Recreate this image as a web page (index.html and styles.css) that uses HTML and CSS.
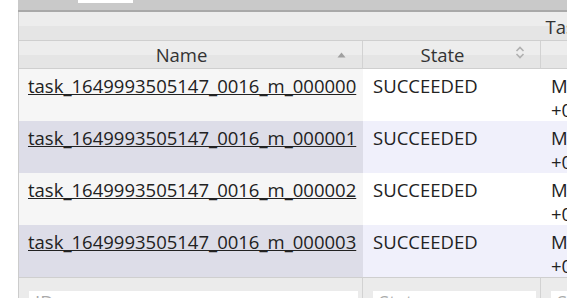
FILE: index.html
```html
<!DOCTYPE html>
<html lang="en">
<head>
    <meta charset="UTF-8">
    <meta name="viewport" content="width=device-width, initial-scale=1.0">
    <title>Tasks</title>
    <link rel="stylesheet" href="styles.css">
</head>
<body>
    <div class="page">
        <!-- Toolbar (scrolled off the top) -->
        <div class="toolbar"><span class="search-box"></span></div>

        <!-- Task table -->
        <table class="grid">
            <colgroup>
                <col class="col-name">
                <col class="col-state">
                <col class="col-time">
                <col class="col-time">
                <col class="col-elapsed">
            </colgroup>
            <thead>
                <tr class="group-row">
                    <th colspan="5">Tasks</th>
                </tr>
                <tr class="head-row">
                    <th class="sort-asc">Name
                        <svg class="sort-icon" width="9" height="6" viewBox="0 0 9 6"><path d="M4.5 0.5 L8.5 5.5 L0.5 5.5 Z" fill="#a0a0a0"/></svg>
                    </th>
                    <th class="sortable">State
                        <svg class="sort-icon" width="10" height="13" viewBox="0 0 10 13"><path d="M1.5 5 L5 1.5 L8.5 5" fill="none" stroke="#b0b0b0" stroke-width="1.6"/><path d="M1.5 8 L5 11.5 L8.5 8" fill="none" stroke="#b0b0b0" stroke-width="1.6"/></svg>
                    </th>
                    <th class="sortable">Start Time</th>
                    <th class="sortable">Finish Time</th>
                    <th class="sortable">Elapsed Time</th>
                </tr>
            </thead>
            <tbody>
                <tr class="odd">
                    <td class="sorted"><a href="#">task_1649993505147_0016_m_000000</a></td>
                    <td>SUCCEEDED</td>
                    <td>Mon Apr 18 10:41:12<br>+0800 2022</td>
                    <td>Mon Apr 18 10:41:20<br>+0800 2022</td>
                    <td>8sec</td>
                </tr>
                <tr class="even">
                    <td class="sorted"><a href="#">task_1649993505147_0016_m_000001</a></td>
                    <td>SUCCEEDED</td>
                    <td>Mon Apr 18 10:41:12<br>+0800 2022</td>
                    <td>Mon Apr 18 10:41:21<br>+0800 2022</td>
                    <td>9sec</td>
                </tr>
                <tr class="odd">
                    <td class="sorted"><a href="#">task_1649993505147_0016_m_000002</a></td>
                    <td>SUCCEEDED</td>
                    <td>Mon Apr 18 10:41:12<br>+0800 2022</td>
                    <td>Mon Apr 18 10:41:20<br>+0800 2022</td>
                    <td>8sec</td>
                </tr>
                <tr class="even">
                    <td class="sorted"><a href="#">task_1649993505147_0016_m_000003</a></td>
                    <td>SUCCEEDED</td>
                    <td>Mon Apr 18 10:41:12<br>+0800 2022</td>
                    <td>Mon Apr 18 10:41:21<br>+0800 2022</td>
                    <td>9sec</td>
                </tr>
            </tbody>
            <tfoot>
                <tr>
                    <th><input type="text" placeholder="ID"></th>
                    <th><input type="text" placeholder="State"></th>
                    <th><input type="text" placeholder="Start Time"></th>
                    <th><input type="text" placeholder="Finish Time"></th>
                    <th><input type="text" placeholder="Elapsed Time"></th>
                </tr>
            </tfoot>
        </table>
    </div>
</body>
</html>
```

FILE: styles.css
```css
html, body {
    margin: 0;
    overflow: hidden;
    background: #fff;
}
body {
    font-family: "Open Sans", "Noto Sans", sans-serif;
    font-size: 18.5px;
    color: #222;
}
.page {
    padding-left: 18px;
}
.toolbar {
    width: 1104px;
    height: 10px;
    background: #c9c9c9;
    border-bottom: 2px solid #a9a9a9;
}
.search-box {
    display: block;
    margin-left: 60px;
    width: 55px;
    height: 3px;
    background: #fff;
}
.grid {
    width: 1102px;
    table-layout: fixed;
    border-collapse: separate;
    border-spacing: 0;
    border-left: 1px solid #cccccc;
}
.col-name { width: 344px; }
.col-state { width: 178px; }
.col-time { width: 210px; }
.grid thead th {
    font-weight: normal;
    color: #333;
    background: linear-gradient(to bottom, #ededed 50%, #e5e5e5 50%);
    border-bottom: 1px solid #cfcfcf;
    text-align: center;
    position: relative;
}
.group-row th {
    height: 28px;
    padding: 0;
}
.head-row th {
    height: 27px;
    padding: 0 18px 0 0;
    border-right: 1px solid #d2d2d2;
}
.sort-icon {
    position: absolute;
    right: 16px;
    top: 11px;
}
.sortable .sort-icon {
    right: 15px;
    top: 5px;
}
.grid tbody td {
    padding: 5px 10px 0 9px;
    line-height: 23.5px;
    vertical-align: top;
    white-space: nowrap;
    overflow: hidden;
}
.grid tbody td + td {
    padding-left: 10px;
}
.grid a {
    color: #222;
    text-decoration: underline;
}
.odd td { background: #ffffff; }
.odd td.sorted { background: #f6f6f6; }
.even td { background: #f0f0fb; }
.even td.sorted { background: #dddde8; }
.grid tfoot th {
    background: #ebebeb;
    border-top: 1px solid #cfcfcf;
    border-right: 1px solid #d2d2d2;
    padding: 13px 4px 6px 10px;
    text-align: left;
}
.grid tfoot input {
    display: block;
    box-sizing: border-box;
    width: 100%;
    height: 26px;
    border: none;
    padding: 0 6px 6px;
    font: inherit;
    font-weight: normal;
}
.grid tfoot input::placeholder {
    color: #aaa;
}
```
